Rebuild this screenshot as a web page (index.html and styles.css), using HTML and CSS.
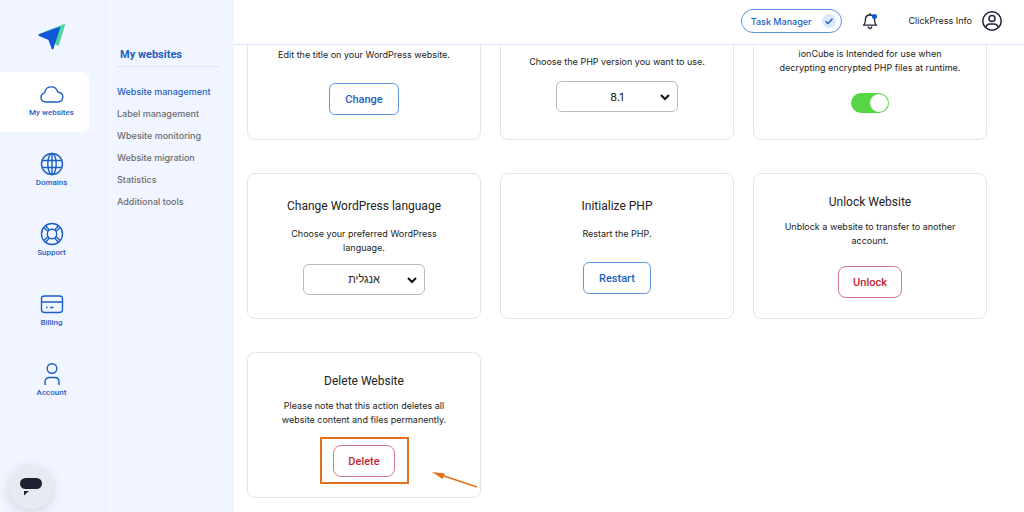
FILE: index.html
```html
<!DOCTYPE html>
<html lang="en">

<head>
    <meta charset="UTF-8">
    <meta name="viewport" content="width=device-width, initial-scale=1.0">
    <title>My websites</title>
    <link rel="stylesheet" href="styles.css">
</head>

<body>

    <div class="layout">

        <nav class="sidebar">
            <a href="#" class="logo" aria-label="Home">
                <svg width="28" height="28" viewBox="0 0 28 28">
                    <path d="M6 9 L26 1 Q27.500 .5 27 2 L21 22 Q20 23.500 18.500 22 Z" fill="#4fd6a4" />
                    <path d="M1 11 L21 4 Q23 3.500 22 5.500 L15.500 25.500 Q14.500 27.500 13.500 25.500 L10.500 17 L1.200 13 Q-.2 12 1 11 Z" fill="#1257d8" />
                </svg>
            </a>
            <a href="#" class="nav-item active">
                <svg width="26" height="24" viewBox="0 0 26 24">
                    <path d="M6.500 20 H19.500 A5 5 0 0 0 20 10.200 A1 1 0 0 1 18.500 9.500 A6.600 6.600 0 0 0 5.900 9.600 Q5.800 10.800 5 11.100 A4.600 4.600 0 0 0 6.500 20 Z" />
                </svg>
                <span>My websites</span>
            </a>
            <a href="#" class="nav-item">
                <svg width="24" height="24" viewBox="0 0 24 24">
                    <circle cx="12" cy="12" r="10.500" />
                    <ellipse cx="12" cy="12" rx="4.200" ry="10.500" />
                    <path d="M12 1.500 V22.500 M2.200 8.500 H21.800 M2.200 15.500 H21.800" />
                </svg>
                <span>Domains</span>
            </a>
            <a href="#" class="nav-item">
                <svg width="24" height="24" viewBox="0 0 24 24">
                    <circle cx="12" cy="12" r="10.500" />
                    <circle cx="12" cy="12" r="4.700" />
                    <path d="M3.800 5.600 L8 9.400 M5.600 3.800 L9.400 8 M20.200 5.600 L16 9.400 M18.400 3.800 L14.600 8 M3.800 18.400 L8 14.600 M5.600 20.200 L9.400 16 M20.200 18.400 L16 14.600 M18.400 20.200 L14.600 16" />
                </svg>
                <span>Support</span>
            </a>
            <a href="#" class="nav-item">
                <svg width="24" height="24" viewBox="0 0 24 24">
                    <rect x="1.500" y="4" width="21" height="16.500" rx="3" />
                    <path d="M1.500 10 H22.500 M6 15.500 H7.500 M10 15.500 H13.500" />
                </svg>
                <span>Billing</span>
            </a>
            <a href="#" class="nav-item">
                <svg width="24" height="24" viewBox="0 0 24 24">
                    <circle cx="12" cy="6.500" r="4.800" />
                    <path d="M5 23 V20 Q5 15.500 9.500 15.500 H14.500 Q19 15.500 19 20 V23" />
                </svg>
                <span>Account</span>
            </a>
        </nav>

        <div class="submenu">
            <h2>My websites</h2>
            <ul>
                <li><a href="#" class="active">Website management</a></li>
                <li><a href="#">Label management</a></li>
                <li><a href="#">Wbesite monitoring</a></li>
                <li><a href="#">Website migration</a></li>
                <li><a href="#">Statistics</a></li>
                <li><a href="#">Additional tools</a></li>
            </ul>
        </div>

        <div class="content">
            <header class="topbar">
                <button type="button" class="task-btn">
                    Task Manager
                    <svg width="14" height="14" viewBox="0 0 14 14">
                        <circle cx="7" cy="7" r="7" fill="#dce8fb" />
                        <path d="M3.500 7.200 L6 9.500 L10.500 4.800" fill="none" stroke="#1c5fc4" stroke-width="1.400" />
                    </svg>
                </button>
                <button type="button" class="bell" aria-label="Notifications">
                    <svg width="16" height="18" viewBox="0 0 16 18">
                        <path d="M1.500 13.200 Q3.400 11.500 3.400 8.500 V7.500 Q3.400 3 8 3 Q12.600 3 12.600 7.500 V8.500 Q12.600 11.500 14.500 13.200 Z M8 3 V1 M6 14.500 Q6.500 16.500 8 16.500 Q9.500 16.500 10 14.500" fill="none" stroke="#1d2238" stroke-width="1.300" stroke-linejoin="round" />
                        <circle cx="12.500" cy="4.500" r="2.500" fill="#1257d8" />
                    </svg>
                </button>
                <a href="#" class="user">
                    ClickPress Info
                    <svg width="20" height="20" viewBox="0 0 20 20" fill="none" stroke="#1d2238" stroke-width="1.500">
                        <circle cx="10" cy="10" r="9.200" />
                        <circle cx="10" cy="7.500" r="3" />
                        <path d="M4 16.500 Q4.500 13 8 13 H12 Q15.500 13 16 16.500" />
                    </svg>
                </a>
            </header>

            <main class="cards">
                <section class="card">
                    <h3>Website title</h3>
                    <p>Edit the title on your WordPress website.</p>
                    <button type="button" class="btn">Change</button>
                </section>

                <section class="card card-php">
                    <h3>PHP version</h3>
                    <p><label for="php">Choose the PHP version you want to use.</label></p>
                    <div class="select-box">
                        <select id="php">
                            <option>8.1</option>
                        </select>
                        <svg width="10" height="8" viewBox="0 0 10 8"><path d="M1 2 L5 6 L9 2" /></svg>
                    </div>
                </section>

                <section class="card tight">
                    <h3>ionCube</h3>
                    <p><label for="ioncube">ionCube is Intended for use when<br>decrypting encrypted PHP files at runtime.</label></p>
                    <input type="checkbox" id="ioncube" class="toggle" checked>
                </section>

                <section class="card card-lang">
                    <h3>Change WordPress language</h3>
                    <p><label for="lang">Choose your preferred WordPress<br>language.</label></p>
                    <div class="select-box">
                        <select id="lang">
                            <option lang="he">אנגלית</option>
                        </select>
                        <svg width="10" height="8" viewBox="0 0 10 8"><path d="M1 2 L5 6 L9 2" /></svg>
                    </div>
                </section>

                <section class="card">
                    <h3>Initialize PHP</h3>
                    <p>Restart the PHP.</p>
                    <button type="button" class="btn">Restart</button>
                </section>

                <section class="card tight">
                    <h3>Unlock Website</h3>
                    <p>Unblock a website to transfer to another<br>account.</p>
                    <button type="button" class="btn danger">Unlock</button>
                </section>

                <section class="card tight">
                    <h3>Delete Website</h3>
                    <p>Please note that this action deletes all<br>website content and files permanently.</p>
                    <button type="button" class="btn danger marked">Delete</button>
                    <svg class="arrow" width="48" height="18" viewBox="0 0 48 18">
                        <path d="M46 16 L10 4" stroke="#e2711d" stroke-width="1.500" fill="none" />
                        <path d="M1 1 L14 2.500 L11.500 8 Z" fill="#e2711d" />
                    </svg>
                </section>
            </main>
        </div>
    </div>

    <button type="button" class="chat" aria-label="Chat">
        <svg width="24" height="20" viewBox="0 0 24 20" fill="#1d2230">
            <rect x="1" y="1" width="22" height="11" rx="5.500" />
            <path d="M5 14 H10 L5 18.500 Z" />
        </svg>
    </button>

</body>

</html>
```
FILE: styles.css
```css
* {
    margin: 0;
    padding: 0;
    box-sizing: border-box;
}

ul li {
    list-style: none;
}

a {
    text-decoration: none;
}

body {
    font-family: Inter, "Liberation Sans", sans-serif;
    font-size: 9px;
    line-height: 14px;
    color: #222;
    background: #fff;
}

button,
select {
    font-family: inherit;
    background: #fff;
    cursor: pointer;
}

svg {
    display: block;
}

.layout {
    display: flex;
    height: 100vh;
    overflow: hidden;
}

/* left icon bar */
.sidebar {
    flex: none;
    width: 106px;
    padding-top: 23px;
    background: #f1f5ff;
    border-right: 1px solid #e9eefa;
    display: flex;
    flex-direction: column;
    gap: 10px;
}

.logo {
    margin: 0 0 11px 38px;
}

.nav-item {
    width: 89px;
    height: 60px;
    padding: 10px 0 0 14px;
    display: flex;
    flex-direction: column;
    align-items: center;
    color: #1c5fc4;
    font-family: Roboto, sans-serif;
    font-size: 8px;
    font-weight: 500;
}

.nav-item svg {
    fill: none;
    stroke: #1c5fc4;
    stroke-width: 1.4;
}

.nav-item.active {
    background: #fff;
    border-radius: 0 6px 6px 0;
}

/* second level menu */
.submenu {
    flex: none;
    width: 128px;
    padding: 47px 14px 0 11px;
    background: #f1f5ff;
}

.submenu h2 {
    height: 20px;
    padding-left: 3px;
    font-family: Roboto, sans-serif;
    font-size: 11px;
    line-height: 16px;
    color: #1c5fc4;
    border-bottom: 1px solid #dfe4ee;
}

.submenu ul {
    margin-top: 14px;
}

.submenu li {
    line-height: 22px;
    white-space: nowrap;
}

.submenu a {
    color: #6a6c70;
    font-weight: 500;
}

.submenu a.active {
    color: #1c5fc4;
}

/* header */
.content {
    flex: 1;
    min-width: 0;
}

.topbar {
    position: relative;
    z-index: 2;
    height: 45px;
    padding: 0 22px 2px 0;
    background: #fff;
    border-bottom: 1px solid #dde6fa;
    display: flex;
    align-items: center;
    justify-content: flex-end;
}

.task-btn {
    height: 24px;
    padding: 0 5px 0 9px;
    display: flex;
    align-items: center;
    gap: 10px;
    border: 1px solid #5b93e0;
    border-radius: 12px;
    color: #1c5fc4;
    font-size: 9px;
    font-weight: 500;
}

.bell {
    margin: 0 31px 0 20px;
    border: 0;
}

.user {
    display: flex;
    align-items: center;
    gap: 10px;
    color: #222;
}

/* cards, the first row is scrolled under the header */
.cards {
    margin-top: -51px;
    padding: 0 37px 15px 13px;
    display: grid;
    grid-template-columns: repeat(3, 1fr);
    gap: 33px 19px;
}

.card {
    position: relative;
    height: 146px;
    border: 1px solid #e4e5e8;
    border-radius: 8px;
    display: flex;
    flex-direction: column;
    align-items: center;
    justify-content: center;
    text-align: center;
    white-space: nowrap;
}

.card h3 {
    margin-bottom: 13px;
    font-family: Roboto, sans-serif;
    font-size: 12px;
    line-height: 16px;
    font-weight: normal;
}

.card p {
    margin-bottom: 21px;
}

.card.tight h3 {
    margin-bottom: 10px;
}

.card.tight p {
    margin-bottom: 18px;
}

.card.card-php h3 {
    margin-bottom: 17px;
}

.card.card-php p {
    margin-bottom: 12px;
}

.card.card-lang p {
    margin-bottom: 9px;
}

.btn {
    position: relative;
    height: 32px;
    padding: 0 15px;
    border: 1px solid #6496da;
    border-radius: 6px;
    color: #1c5fc4;
    font-family: Roboto, sans-serif;
    font-size: 11px;
    font-weight: 500;
}

.btn.danger {
    padding: 0 14px;
    border-color: #d0758a;
    border-radius: 8px;
    color: #c21f35;
}

/* frame round the delete button */
.marked::after {
    content: "";
    position: absolute;
    inset: -9px -15px -8px -14px;
    border: 2px solid #e2711d;
}

.arrow {
    position: absolute;
    right: 1px;
    bottom: 8px;
}

.select-box {
    position: relative;
    width: 122px;
}

.select-box select {
    width: 100%;
    height: 31px;
    appearance: none;
    border: 1px solid #b9bbbf;
    border-radius: 6px;
    color: #222;
    font-size: 11px;
    text-align: center;
    text-align-last: center;
}

.select-box svg {
    position: absolute;
    right: 8px;
    top: 12px;
    fill: none;
    stroke: #111;
    stroke-width: 2;
    pointer-events: none;
}

.toggle {
    width: 38px;
    height: 20px;
    padding: 1px;
    appearance: none;
    border-radius: 10px;
    background: #ccc;
    display: flex;
}

.toggle::before {
    content: "";
    width: 18px;
    height: 18px;
    border-radius: 50%;
    background: #fff;
}

.toggle:checked {
    background: #57d645;
    justify-content: flex-end;
}

/* chat bubble */
.chat {
    position: fixed;
    left: 9px;
    bottom: 3px;
    width: 44px;
    height: 44px;
    display: flex;
    align-items: center;
    justify-content: center;
    border: 0;
    border-radius: 50%;
    background: #e8eaf2;
    box-shadow: 0 3px 12px rgba(60, 90, 90, .2);
}
```
